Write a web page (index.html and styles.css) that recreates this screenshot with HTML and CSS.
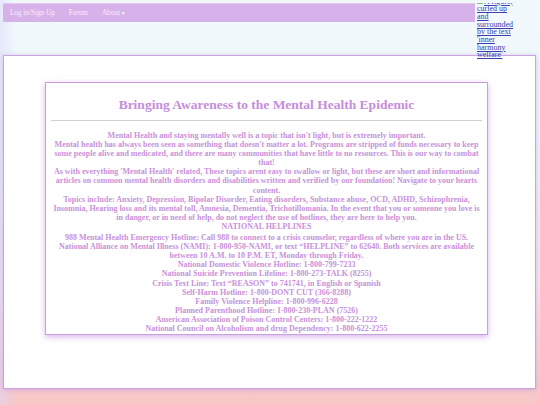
FILE: index.html
```html
<!DOCTYPE html>
<html>
<head>
<meta charset="utf-8">
<link rel="stylesheet" href="styles.css">
</head>
<body>
<div class="top">
  <nav class="nav">
    <a class="nav-item" href="#">Log in/Sign Up</a>
    <a class="nav-item" href="#">Forum</a>
    <a class="nav-item" href="#">About <span class="caret">&#9662;</span></a>
  </nav>
  <div class="alt-wrap">
    <a class="alt" href="#"><span class="broken"></span>A figure, curled up and surrounded by the text 'inner harmony welfare'</a>
  </div>
</div>
<main class="outer">
  <section class="inner">
    <h1 class="title">Bringing Awareness to the Mental Health Epidemic</h1>
    <hr class="rule">
    <div class="body">
      <p>Mental Health and staying mentally well is a topic that isn't light, but is extremely important.<br>
      Mental health has always been seen as something that doesn't matter a lot. Programs are stripped of funds necessary to keep some people alive and medicated, and there are many communities that have little to no resources. This is our way to combat that!<br>
      As with everything 'Mental Health' related, These topics arent easy to swallow or light, but these are short and informational articles on common mental health disorders and disabilities written and verified by our foundation! Navigate to your hearts content.<br>
      Topics include: Anxiety, Depression, Bipolar Disorder, Eating disorders, Substance abuse, OCD, ADHD, Schizophrenia, Insomnia, Hearing loss and its mental toll, Amnesia, Dementia, Trichotillomania. In the event that you or someone you love is in danger, or in need of help, do not neglect the use of hotlines, they are here to help you.<br>
      NATIONAL HELPLINES</p>
      <p class="lines">988 Mental Health Emergency Hotline: Call 988 to connect to a crisis counselor, regardless of where you are in the US.<br>
      National Alliance on Mental Illness (NAMI): 1-800-950-NAMI, or text “HELPLINE” to 62640. Both services are available between 10 A.M. to 10 P.M. ET, Monday through Friday.<br>
      National Domestic Violence Hotline: 1-800-799-7233<br>
      National Suicide Prevention Lifeline: 1-800-273-TALK (8255)<br>
      Crisis Text Line: Text “REASON” to 741741, in English or Spanish<br>
      Self-Harm Hotline: 1-800-DONT CUT (366-8288)<br>
      Family Violence Helpline: 1-800-996-6228<br>
      Planned Parenthood Hotline: 1-800-230-PLAN (7526)<br>
      American Association of Poison Control Centers: 1-800-222-1222<br>
      National Council on Alcoholism and drug Dependency: 1-800-622-2255</p>
    </div>
  </section>
</main>
</body>
</html>
```
FILE: styles.css
```css
html, body {
  margin: 0;
  height: 100%;
}
body {
  padding: 3px 4px 0 3px;
  box-sizing: border-box;
  font-family: "Liberation Serif", "DejaVu Serif", serif;
  background:
    linear-gradient(to right, rgba(220, 215, 250, 0.5) 0%, rgba(220, 215, 250, 0) 3%),
    linear-gradient(to bottom, #f1f9fc 0%, #eef6fb 35%, #f2e6f0 70%, #f8c6c6 100%);
  overflow: hidden;
}
.top {
  display: flex;
  align-items: flex-start;
}
.nav {
  flex: 1;
  height: 19px;
  background: #d7b1e9;
  display: flex;
  align-items: center;
  padding-left: 7px;
  gap: 14px;
  border-top: 1px solid #e4c8f0;
  box-sizing: border-box;
}
.nav-item {
  color: #f7eefb;
  font-size: 7.2px;
  text-decoration: none;
}
.caret {
  font-size: 6px;
}
.alt-wrap {
  width: 59px;
  height: 56px;
  margin-left: 2px;
  margin-bottom: -3px;
  overflow: hidden;
  display: flex;
  flex-direction: column;
  justify-content: flex-end;
}
.alt {
  display: block;
  width: 42px;
  flex-shrink: 0;
  font-size: 8px;
  line-height: 7.67px;
  color: #3d3dab;
  text-decoration: underline;
}
.broken {
  display: inline-block;
  width: 6px;
  height: 6px;
  background: #7ac46a;
  margin-right: 1px;
}
.outer {
  margin-top: -1px;
  height: 334px;
  background: #fff;
  border: 1px solid #caa3df;
  box-shadow: 0 1px 5px rgba(190, 140, 220, 0.55);
  box-sizing: border-box;
  padding-top: 26px;
  padding-left: 41px;
}
.inner {
  width: 443px;
  height: 253px;
  box-sizing: border-box;
  border: 1px solid #c9a0df;
  box-shadow: 0 2px 6px rgba(190, 130, 225, 0.6);
  padding: 0 5px;
  text-align: center;
}
.title {
  margin: 13px 0 0;
  font-family: "Liberation Serif", serif;
  font-size: 13.5px;
  line-height: 18px;
  color: #c68ddb;
}
.rule {
  margin: 6px 0 10px;
  border: 0;
  border-top: 1px solid #cfcfcf;
}
.body {
  color: #c891da;
  font-weight: bold;
  font-size: 8px;
  line-height: 9.1px;
}
.body p {
  margin: 0;
}
.body .lines {
  margin-top: 2px;
}
```
